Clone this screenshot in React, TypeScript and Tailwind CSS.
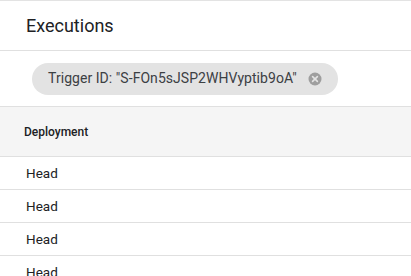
export default function App() {
  const rows = ["Head", "Head", "Head", "Head"];
  return (
    <div className="h-[276px] w-[411px] overflow-hidden bg-white font-['Roboto',sans-serif] text-[#202124]">
      <div className="border-t border-[#e3e3e3]" />
      <div className="flex h-[50px] items-center border-b border-[#e0e0e0] px-[26px]">
        <h1 className="text-[18px] font-normal text-[#202124]">Executions</h1>
      </div>
      <div className="flex h-[56px] items-center border-b border-[#e0e0e0] px-[32px]">
        <div className="flex h-[32px] items-center gap-[11px] rounded-full bg-[#e3e3e3] pl-[16px] pr-[16px]">
          <span className="text-[14px] tracking-[0.05px] text-[#3c4043]">Trigger ID: "S-FOn5sJSP2WHVyptib9oA"</span>
          <svg width="14" height="14" viewBox="0 0 14 14">
            <circle cx="7" cy="7" r="6.5" fill="#9e9e9e" />
            <path d="M4.6 4.6 L9.4 9.4 M9.4 4.6 L4.6 9.4" stroke="#e3e3e3" strokeWidth="1.6" strokeLinecap="round" />
          </svg>
        </div>
      </div>
      <div className="flex h-[50px] items-center border-b border-[#e0e0e0] bg-[#f5f5f5] px-[24px]">
        <span className="text-[12px] font-medium text-[#202124]">Deployment</span>
      </div>
      {rows.map((r, i) => (
        <div key={i} className="flex h-[33px] items-center border-b border-[#e0e0e0] px-[26px]">
          <span className="text-[13.5px] text-[#202124]">{r}</span>
        </div>
      ))}
    </div>
  );
}
